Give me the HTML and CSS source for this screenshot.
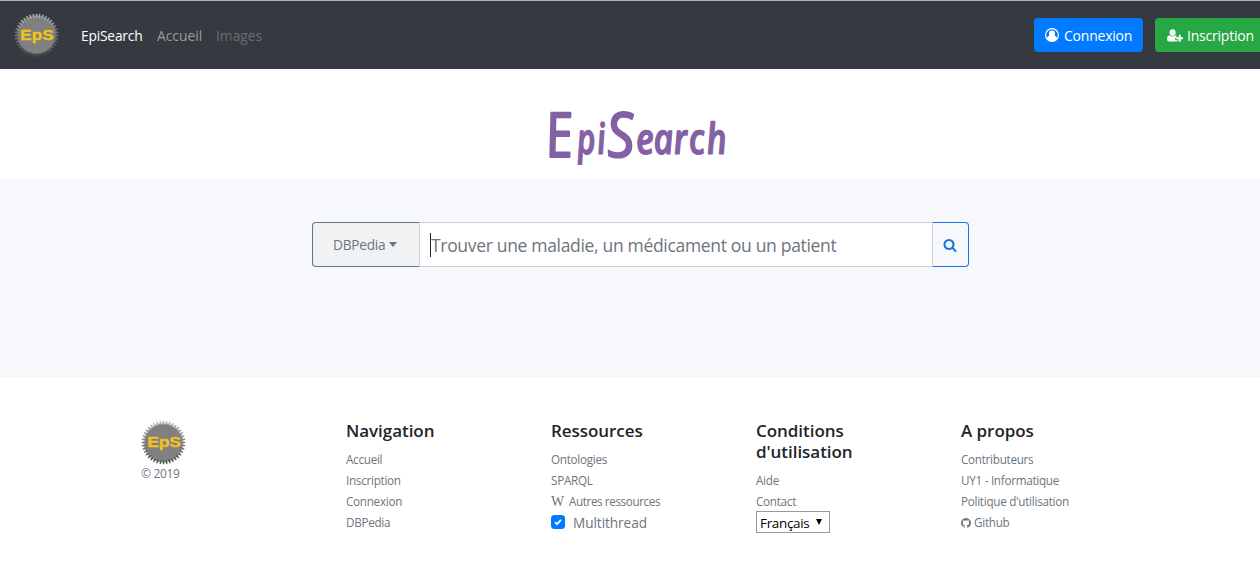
FILE: index.html
```html
<!DOCTYPE html>
<html lang="fr">
<head>
<meta charset="utf-8">
<title>EpiSearch</title>
<link rel="stylesheet" href="styles.css">
</head>
<body>
<svg width="0" height="0" class="defs" aria-hidden="true">
  <defs>
    <linearGradient id="metal" gradientUnits="userSpaceOnUse" x1="0" y1="0" x2="0" y2="46"><stop offset="0" stop-color="#bdbdbd"/><stop offset=".5" stop-color="#777"/><stop offset="1" stop-color="#444"/></linearGradient>
    <symbol id="gear" viewBox="0 0 46 46">
      <circle cx="23" cy="23" r="19.2" fill="#808080"/>
      <circle cx="23" cy="23" r="19.600" fill="none" stroke="url(#metal)" stroke-width="2.2" pathLength="80" stroke-dasharray="1.5 .5" stroke-dashoffset=".75"/>
      <circle cx="23" cy="23" r="21.4" fill="none" stroke="url(#metal)" stroke-width="1.8" pathLength="80" stroke-dasharray=".8 1.2" stroke-dashoffset=".4"/>
    </symbol>
  </defs>
</svg>
<header class="navbar">
  <svg class="gear" viewBox="0 0 46 46"><use href="#gear"/><text class="gear-text" x="6.500" y="27.500" textLength="34" lengthAdjust="spacingAndGlyphs">EpS</text></svg>
  <nav class="nav-links"><a class="brand">EpiSearch</a><a class="home">Accueil</a><a class="disabled">Images</a></nav>
  <div class="actions">
    <a class="btn btn-blue"><svg class="ico-user" viewBox="0 0 14 14"><circle cx="7" cy="7" r="6.400" fill="none" stroke="#fff" stroke-width="1.200"/><ellipse cx="7" cy="5.700" rx="3" ry="3.200" fill="#fff"/><path fill="#fff" d="M1.900 11q.3-3 2.500-3.500Q7 9.800 9.600 7.500q2.200.5 2.500 3.500Q9.800 13.500 7 13.500T1.900 11z"/></svg><span>Connexion</span></a>
    <a class="btn btn-green"><svg class="ico-plus" viewBox="0 0 16 13"><ellipse cx="5.600" cy="3.600" rx="3" ry="3.300" fill="#fff"/><path fill="#fff" d="M0 10.200Q0 6.700 2.400 6.300q3.200 2.500 6.300 0l.7.300v2.200H8.200v2.400h2.900v.5q-.4.800-1.500.8H2Q0 12.500 0 10.200z"/><path d="M12.700 5.800v7M9.200 9.300h6.800" stroke="#fff" stroke-width="1.900"/></svg><span>Inscription</span></a>
  </div>
</header>
<section class="title">
  <svg class="wordmark" viewBox="0 0 184 84"><text class="word cap" transform="translate(2 64) skewX(9) scale(.86 1)">E</text><text class="word" transform="translate(32 61) skewX(5) scale(.74 1)" x="0 27">pi</text><text class="word cap" transform="translate(62 64) skewX(4) scale(.88 1)">S</text><text class="word" transform="translate(91 61) skewX(5) scale(.8 1)" x="0 22 47 66 88">earch</text></svg>
</section>
<main class="search-area">
  <div class="search">
    <button class="source"><span>DBPedia</span><i class="caret"></i></button>
    <div class="field"><i class="cursor"></i><span class="placeholder">Trouver une maladie, un médicament ou un patient</span></div>
    <button class="go"><svg class="ico-search" viewBox="0 0 1792 1792"><path fill="currentColor" d="M1216 832q0-185-131.500-316.500t-316.500-131.500-316.500 131.500-131.500 316.500 131.500 316.500 316.500 131.500 316.500-131.500 131.500-316.500zm512 832q0 52-38 90t-90 38q-54 0-90-38l-343-342q-179 124-399 124-143 0-273.500-55.500t-225-150-150-225-55.500-273.500 55.500-273.500 150-225 225-150 273.500-55.500 273.500 55.500 225 150 150 225 55.500 273.500q0 220-124 399l343 343q37 37 37 90z"/></svg></button>
  </div>
</main>
<footer class="footer">
  <div class="col logo-col"><svg class="gear" viewBox="0 0 46 46"><use href="#gear"/><text class="gear-text" x="6.500" y="27.500" textLength="34" lengthAdjust="spacingAndGlyphs">EpS</text></svg><small>© 2019</small></div>
  <div class="col"><h5>Navigation</h5><a>Accueil</a><a>Inscription</a><a>Connexion</a><a>DBPedia</a></div>
  <div class="col"><h5>Ressources</h5><a>Ontologies</a><a>SPARQL</a><a class="other"><span class="wiki">W</span>Autres ressources</a>
    <label class="check"><svg class="box" viewBox="0 0 14 14"><rect width="14" height="14" rx="3.500" fill="#007bff"/><path d="M4 7.200l2 2 4-4.300" fill="none" stroke="#fff" stroke-width="1.900"/></svg><span>Multithread</span></label></div>
  <div class="col"><h5>Conditions<br>d'utilisation</h5><a>Aide</a><a>Contact</a><div class="select"><span>Français</span><i class="arrow"></i></div></div>
  <div class="col"><h5>A propos</h5><a>Contributeurs</a><a>UY1 - Informatique</a><a>Politique d'utilisation</a><a class="git"><svg class="ico-git" viewBox="128 128 1536 1536"><path fill="currentColor" d="M896 128q209 0 385.500 103t279.500 279.500 103 385.500q0 251-146.500 451.500t-378.500 277.500q-27 5-40-7t-13-30q0-3 .5-76.500t.5-134.500q0-97-52-142 57-6 102.500-18t94-39 81-66.500 53-105 20.500-150.500q0-119-79-206 37-91-8-204-28-9-81 11t-92 44l-38 24q-93-26-192-26t-192 26q-16-11-42.500-27t-83.500-38.500-85-13.500q-45 113-8 204-79 87-79 206 0 85 20.500 150t52.500 105 80.500 67 94 39 102.500 18q-39 36-49 103-21 10-45 15t-57 5-65.500-21.500-55.500-62.500q-19-32-48.500-52t-49.500-24l-20-3q-21 0-29 4.500t-5 11.500 9 14 13 12l7 5q22 10 43.500 38t31.500 51l10 23q13 38 44 61.500t67 30 69.500 7 55.500-3.500l23-4q0 38 .5 88.500t.5 54.500q0 18-13 30t-40 7q-232-77-378.500-277.500t-146.500-451.500q0-209 103-385.500t279.500-279.500 385.500-103z"/></svg>Github</a></div>
</footer>
</body>
</html>
```
FILE: styles.css
```css
* { box-sizing: border-box; }
body { margin: 0; width: 1260px; height: 570px; overflow: hidden; background: #fff; font-family: "Open Sans", "Noto Sans", sans-serif; color: #212529; }
.defs { display: block; }
.navbar { height: 69px; background: #343a40; border-top: 1px solid #a9b4bb; display: flex; align-items: center; padding: 0 0 0 14px; }
.gear { width: 45px; height: 45px; flex: none; display: block; }
.gear-text { font: bold 15px "Liberation Sans", sans-serif; fill: #f3c31d; stroke: #f3c31d; stroke-width: .3; }
.nav-links { display: flex; gap: 14px; margin-left: 22px; font-size: 13.800px; letter-spacing: -.2px; line-height: 20px; padding-top: 1px; white-space: nowrap; }
.brand { color: #fff; width: 62px; }
.home { color: #999c9f; width: 45px; letter-spacing: 0; }
.disabled { color: #686d71; letter-spacing: 0; }
.actions { display: flex; gap: 12px; margin-left: auto; margin-right: -7px; }
.btn { height: 34px; border-radius: 4px; color: #fff; display: flex; align-items: center; font-size: 14px; letter-spacing: -.22px; flex: none; white-space: nowrap; }
.btn-blue { width: 109px; background: #007bff; padding-left: 11px; gap: 5px; }
.btn-green { width: 112px; background: #28a745; padding-left: 12px; gap: 4px; }
.ico-user { width: 14px; height: 14px; }
.ico-plus { width: 16px; height: 13px; }
.title { height: 110px; display: flex; justify-content: center; padding: 24px 0 0 16px; }
.wordmark { width: 184px; height: 84px; overflow: visible; }
.word { font-family: "Open Sans", sans-serif; font-style: italic; font-weight: 600; font-size: 43px; fill: #8460a4; stroke: #8460a4; stroke-width: 1.200; stroke-linejoin: round; }
.cap { font-size: 62px; font-weight: 400; stroke-width: 2; }
.search-area { height: 198px; background: #f7f8fb; padding: 43px 0 0 312px; }
.search { width: 657px; height: 45px; display: flex; }
.source { width: 107px; border: 1px solid #6c757d; border-right: 0; border-radius: 4px 0 0 4px; background: #f1f2f4; color: #6c757d; font: 13.700px "Open Sans", sans-serif; letter-spacing: -.25px; display: flex; align-items: center; padding: 0 0 0 20px; gap: 4px; }
.caret { border: 4.500px solid transparent; border-top: 5px solid #6c757d; border-bottom: 0; margin-top: -1px; }
.field { width: 514px; border: 1px solid #c8cfd6; background: #fff; display: flex; align-items: center; padding: 1px 0 0 10px; color: #6c757d; font-size: 17.500px; letter-spacing: -.32px; white-space: nowrap; }
.cursor { width: 1px; height: 24px; background: #222; margin-top: -1px; }
.go { width: 36px; padding: 0 1px 0 0; border: 1px solid #1674e5; border-left: 0; border-radius: 0 4px 4px 0; background: #f7f8fb; color: #1674e5; display: flex; align-items: center; justify-content: center; }
.ico-search { width: 14px; height: 14px; }
.footer { padding: 43px 94px 0 141px; display: grid; grid-template-columns: repeat(5, 205px); }
.col { color: #6c757d; font-size: 11.700px; letter-spacing: -.28px; }
.col small { display: block; font-size: 11.900px; line-height: 17px; }
.col h5 { margin: 0 0 8px; font-size: 17px; letter-spacing: -.05px; font-weight: 600; line-height: 21px; color: #212529; }
.col a { display: block; line-height: 21px; white-space: nowrap; }
.col .other { letter-spacing: -.4px; }
.wiki { display: inline-block; width: 18px; font: 14px/20px "Liberation Serif", serif; }
.check { display: flex; align-items: center; height: 20px; gap: 8px; font-size: 13.600px; letter-spacing: -.05px; }
.box { width: 14px; height: 14px; }
.select { width: 74px; height: 22px; border: 1px solid #999; color: #000; display: flex; align-items: center; padding: 2px 0 0 3px; font-size: 13.400px; gap: 7px; margin-top: -1px; }
.arrow { border: 3.500px solid transparent; border-top: 6px solid #000; border-bottom: 0; margin-top: -3px; }
.ico-git { width: 10px; height: 10px; margin-right: 3px; vertical-align: -1px; }
```
